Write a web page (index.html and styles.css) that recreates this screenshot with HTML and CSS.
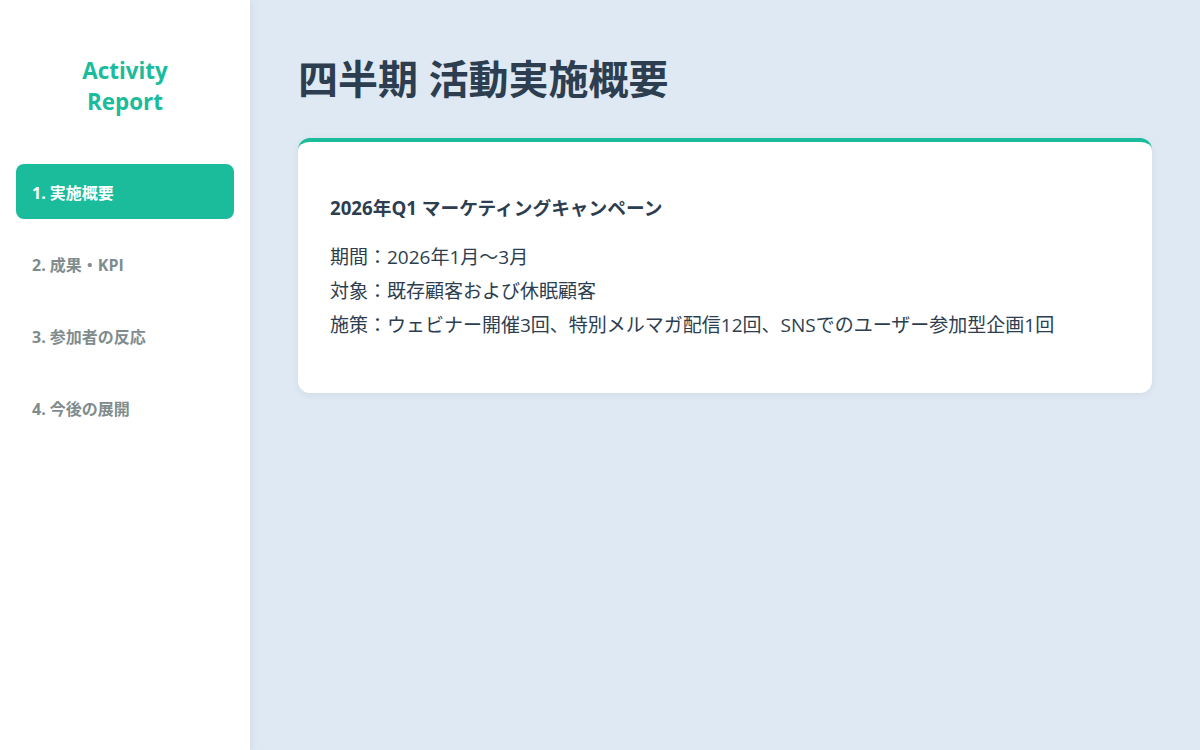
FILE: index.html
```html
<!DOCTYPE html>
<html lang="ja">
<head>
<meta charset="utf-8">
<title>Activity Report</title>
<link rel="stylesheet" href="styles.css">
</head>
<body>
<div class="app">
  <aside class="sidebar">
    <div class="logo">Activity<br>Report</div>
    <nav class="nav">
      <div class="nav-item active">1. 実施概要</div>
      <div class="nav-item">2. 成果・KPI</div>
      <div class="nav-item">3. 参加者の反応</div>
      <div class="nav-item">4. 今後の展開</div>
    </nav>
  </aside>
  <main class="main">
    <h1 class="title">四半期 活動実施概要</h1>
    <section class="card">
      <h3 class="card-title">2026年Q1 マーケティングキャンペーン</h3>
      <p class="line">期間：2026年1月〜3月</p>
      <p class="line">対象：既存顧客および休眠顧客</p>
      <p class="line">施策：ウェビナー開催3回、特別メルマガ配信12回、SNSでのユーザー参加型企画1回</p>
    </section>
  </main>
</div>
</body>
</html>
```

FILE: styles.css
```css
* { box-sizing: border-box; }
html, body { margin: 0; padding: 0; height: 100%; }
body {
  font-family: "Open Sans", "Noto Sans CJK JP", sans-serif;
  color: #2c3e50;
  background: #dfe9f3;
}
.app {
  display: flex;
  height: 750px;
}
.sidebar {
  width: 250px;
  flex-shrink: 0;
  background: #ffffff;
  box-shadow: 2px 0 8px rgba(0, 0, 0, 0.06);
  padding: 55px 16px 0;
  position: relative;
  z-index: 1;
}
.logo {
  text-align: center;
  color: #1abc9c;
  font-size: 22.4px;
  font-weight: 700;
  line-height: 31px;
  margin-bottom: 47px;
}
.nav {
  display: flex;
  flex-direction: column;
  gap: 17px;
}
.nav-item {
  height: 55px;
  display: flex;
  align-items: center;
  padding: 0 16px;
  font-size: 16px;
  font-weight: 700;
  color: #7f8c8d;
  border-radius: 8px;
}
.nav-item.active {
  background: #1abc9c;
  color: #ffffff;
}
.main {
  flex: 1;
  padding: 55px 48px 0;
}
.title {
  margin: 0 0 35px;
  font-size: 40px;
  font-weight: 700;
  line-height: 48px;
  color: #2c3e50;
}
.card {
  background: #ffffff;
  border-top: 4px solid #1abc9c;
  border-radius: 12px;
  box-shadow: 0 2px 8px rgba(0, 0, 0, 0.06);
  padding: 53px 32px 51px;
}
.card-title {
  margin: 0 0 19px;
  font-size: 18.7px;
  font-weight: 700;
  line-height: 26px;
}
.line {
  margin: 0;
  font-size: 19px;
  line-height: 34px;
}
```
